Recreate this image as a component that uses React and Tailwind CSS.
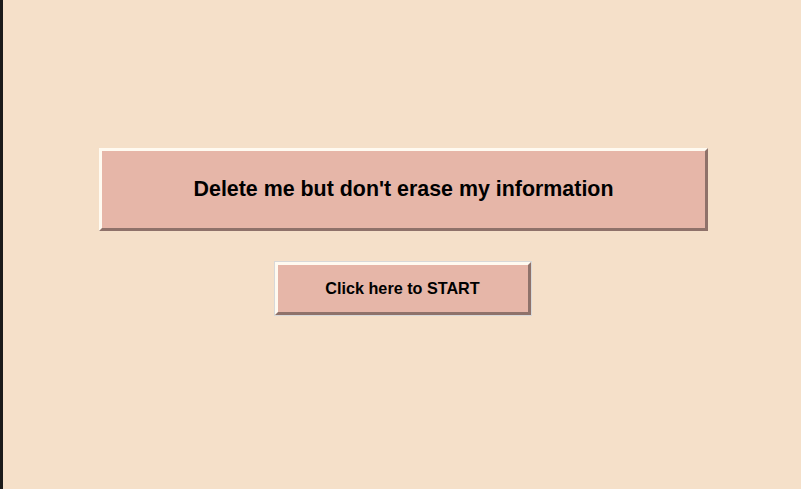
export default function App() {
  return (
    <div className="flex h-[489px] w-[801px] overflow-hidden bg-[#f5e0c9]" style={{ fontFamily: '"Liberation Sans", Arial, sans-serif' }}>
      <div className="w-[3px] shrink-0 bg-[#1b1b1b]" />
      <div className="flex flex-1 flex-col items-center pl-[3px] pt-[148px]">
        <div className="flex h-[83px] w-[609px] items-center justify-center border-[3px] border-b-[#8f726a] border-l-[#fffaf0] border-r-[#8f726a] border-t-[#fffaf0] bg-[#e6b6a8] text-[21.4px] font-bold text-black">
          Delete me but don't erase my information
        </div>
        <div className="-ml-[2px] mt-[30px] border border-[#d8d8d8]">
          <button className="flex h-[53px] w-[256px] items-center justify-center border-[3px] border-b-[#8f726a] border-l-[#fffaf0] border-r-[#8f726a] border-t-[#fffaf0] bg-[#e6b6a8] pb-[1px] text-[16.2px] font-bold text-black">
            Click here to START
          </button>
        </div>
      </div>
    </div>
  );
}
